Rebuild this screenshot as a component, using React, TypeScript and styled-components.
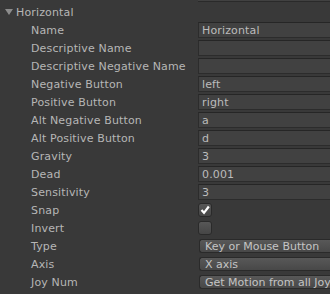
import React from 'react'
import styled, { createGlobalStyle } from 'styled-components'

const GlobalStyle = createGlobalStyle`
  html, body {
    margin: 0;
    padding: 0;
    background: #393939;
    overflow: hidden;
  }
  body {
    font-family: "DejaVu Sans", "Liberation Sans", sans-serif;
    font-size: 11px;
    letter-spacing: 0.15px;
    color: #b6b6b6;
  }
`

const Panel = styled.div`
  width: 330px;
  height: 294px;
  display: flex;
  flex-direction: column;
  overflow: hidden;
`

const PrevField = styled.div`
  height: 2px;
  margin-left: 198px;
  margin-bottom: 1px;
  background: #414141;
  border-bottom: 1px solid #2a2a2a;
  box-sizing: border-box;
`

const Header = styled.div`
  height: 18px;
  display: flex;
  align-items: center;
  padding-left: 5px;
  gap: 3px;
`

const Row = styled.div`
  height: 18px;
  display: grid;
  grid-template-columns: 198px 1fr;
  align-items: center;
`

const Label = styled.span`
  padding-left: 31px;
  white-space: nowrap;
`

const Field = styled.div`
  height: 16px;
  box-sizing: border-box;
  background: #414141;
  border: 1px solid #2c2c2c;
  border-top-color: #262626;
  border-right: none;
  padding-left: 3px;
  display: flex;
  align-items: center;
  color: #bcbcbc;
  white-space: nowrap;
`

const Check = styled.div`
  width: 14px;
  height: 14px;
  box-sizing: border-box;
  border: 1px solid #2a2a2a;
  border-radius: 3px;
  background: linear-gradient(#575757, #464646);
  display: flex;
  align-items: center;
  justify-content: center;
`

const Popup = styled.div`
  height: 14px;
  margin-left: 1px;
  box-sizing: border-box;
  border: 1px solid #2a2a2a;
  border-right: none;
  border-radius: 3px 0 0 3px;
  background: linear-gradient(#585858, #484848);
  padding-left: 5px;
  display: flex;
  align-items: center;
  color: #c4c4c4;
  letter-spacing: 0;
  white-space: nowrap;
  overflow: hidden;
`

type Kind = 'text' | 'check' | 'popup'

interface Prop {
  label: string
  kind: Kind
  value?: string
  on?: boolean
}

const props: Prop[] = [
  { label: 'Name', kind: 'text', value: 'Horizontal' },
  { label: 'Descriptive Name', kind: 'text', value: '' },
  { label: 'Descriptive Negative Name', kind: 'text', value: '' },
  { label: 'Negative Button', kind: 'text', value: 'left' },
  { label: 'Positive Button', kind: 'text', value: 'right' },
  { label: 'Alt Negative Button', kind: 'text', value: 'a' },
  { label: 'Alt Positive Button', kind: 'text', value: 'd' },
  { label: 'Gravity', kind: 'text', value: '3' },
  { label: 'Dead', kind: 'text', value: '0.001' },
  { label: 'Sensitivity', kind: 'text', value: '3' },
  { label: 'Snap', kind: 'check', on: true },
  { label: 'Invert', kind: 'check', on: false },
  { label: 'Type', kind: 'popup', value: 'Key or Mouse Button' },
  { label: 'Axis', kind: 'popup', value: 'X axis' },
  { label: 'Joy Num', kind: 'popup', value: 'Get Motion from all Joysticks' },
]

const Foldout = () => (
  <svg width="8" height="8" viewBox="0 0 8 8">
    <path d="M0 1 L8 1 L4 7 Z" fill="#8c8c8c" />
  </svg>
)

const Tick = () => (
  <svg width="10" height="10" viewBox="0 0 10 10">
    <path d="M1.5 5 L4 7.8 L8.8 1.5" stroke="#ffffff" strokeWidth="2.2" fill="none" />
  </svg>
)

const Control = ({ p }: { p: Prop }) => {
  if (p.kind === 'check') return <Check>{p.on && <Tick />}</Check>
  if (p.kind === 'popup') return <Popup>{p.value}</Popup>
  return <Field>{p.value}</Field>
}

export default function App() {
  return (
    <Panel>
      <GlobalStyle />
      <PrevField />
      <Header>
        <Foldout />
        <span>Horizontal</span>
      </Header>
      {props.map(p => (
        <Row key={p.label}>
          <Label>{p.label}</Label>
          <Control p={p} />
        </Row>
      ))}
    </Panel>
  )
}
